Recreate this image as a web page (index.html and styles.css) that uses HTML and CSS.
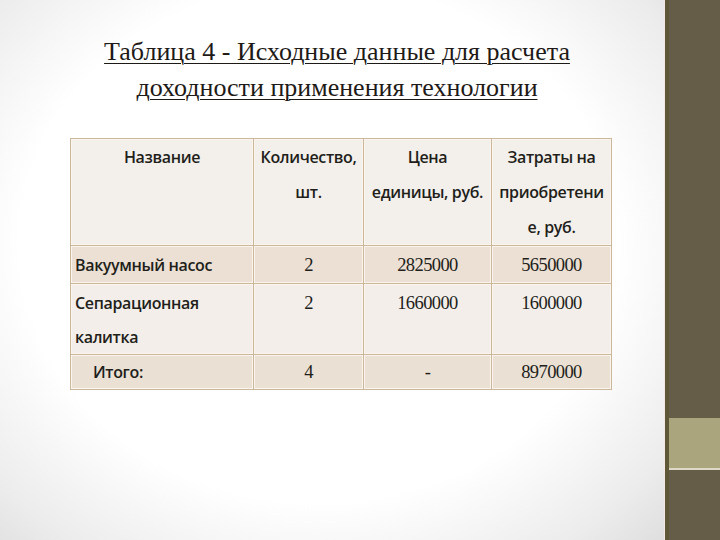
FILE: index.html
```html
<!DOCTYPE html>
<html lang="ru">
<head>
<meta charset="utf-8">
<link rel="stylesheet" href="styles.css">
</head>
<body>
<div class="slide">
  <main class="content">
    <h1 class="title"><span>Таблица 4 - Исходные данные для расчета</span><br><span>доходности применения технологии</span></h1>
    <table class="data">
      <colgroup>
        <col class="c1"><col class="c2"><col class="c3"><col class="c4">
      </colgroup>
      <tr class="head">
        <td class="center">Название</td>
        <td class="center">Количество,<br>шт.</td>
        <td class="center">Цена<br>единицы, руб.</td>
        <td class="center">Затраты на<br>приобретени<br>е, руб.</td>
      </tr>
      <tr class="r1">
        <td class="name">Вакуумный насос</td>
        <td class="num">2</td>
        <td class="num">2825000</td>
        <td class="num">5650000</td>
      </tr>
      <tr class="r2">
        <td class="name">Сепарационная<br>калитка</td>
        <td class="num">2</td>
        <td class="num">1660000</td>
        <td class="num">1600000</td>
      </tr>
      <tr class="r3">
        <td class="name total">Итого:</td>
        <td class="num">4</td>
        <td class="num">-</td>
        <td class="num">8970000</td>
      </tr>
    </table>
  </main>
  <aside class="band">
    <div class="band-top"></div>
    <div class="band-light"></div>
    <div class="band-bottom"></div>
  </aside>
</div>
</body>
</html>
```

FILE: styles.css
```css
html, body {
  margin: 0;
  padding: 0;
}
body {
  width: 720px;
  height: 540px;
  overflow: hidden;
}
.slide {
  display: flex;
  width: 720px;
  height: 540px;
}
.content {
  width: 665px;
  height: 540px;
  background: radial-gradient(ellipse 75% 80% at 48% 45%, #ffffff 60%, #ececec 85%, #dcdcdc 100%);
  border-right: 1px solid #f4e8e4;
  box-sizing: border-box;
  padding-top: 34px;
}
.title {
  margin: 0;
  font-family: "Liberation Serif", "Times New Roman", serif;
  font-weight: normal;
  font-size: 26px;
  line-height: 36px;
  letter-spacing: 0;
  color: #1e1a17;
  text-align: center;
  padding-left: 8px;
  width: 658px;
  text-decoration: underline;
  text-decoration-thickness: 1px;
  text-underline-offset: 3px;
}
.data {
  margin: 32px 0 0 70px;
  border-collapse: collapse;
  table-layout: fixed;
  width: 541px;
  color: #221e1a;
}
.c1 { width: 183px; }
.c2 { width: 110px; }
.c3 { width: 128px; }
.c4 { width: 120px; }
.data td {
  border: 1px solid #cbb89c;
  box-shadow: inset 0 0 0 1px #fbf5ee;
  padding: 0 1px;
  vertical-align: top;
  font-family: "Open Sans", "Liberation Sans", sans-serif;
  font-size: 16px;
  font-weight: 600;
  letter-spacing: -0.35px;
}
.head td {
  background: #f3efeb;
  height: 104px;
  line-height: 35px;
  padding-top: 1px;
  box-sizing: border-box;
}
.center { text-align: center; }
.r1 td { background: #ecdfd3; height: 38px; }
.r2 td { background: #f3eeea; height: 68px; }
.r3 td { background: #ebe0d4; height: 33px; }
.r1 td, .r2 td, .r3 td {
  box-sizing: border-box;
  line-height: 34px;
  padding-top: 2px;
}
.r3 td { line-height: 34px; padding-top: 0; }
.name {
  text-align: left;
  padding-left: 4px !important;
}
.total { padding-left: 22px !important; }
.num {
  text-align: center;
  font-family: "Liberation Serif", "Times New Roman", serif !important;
  font-size: 18.5px !important;
  font-weight: normal !important;
  letter-spacing: -0.6px !important;
}
.band {
  flex: 1;
  display: flex;
  flex-direction: column;
  border-left: 4px solid #5f5838;
}
.band-top {
  height: 418px;
  background: #665d49;
}
.band-light {
  height: 50px;
  background: #aba57e;
  border-bottom: 2px solid #ddd8c8;
}
.band-bottom {
  flex: 1;
  background: #665d49;
}
```
